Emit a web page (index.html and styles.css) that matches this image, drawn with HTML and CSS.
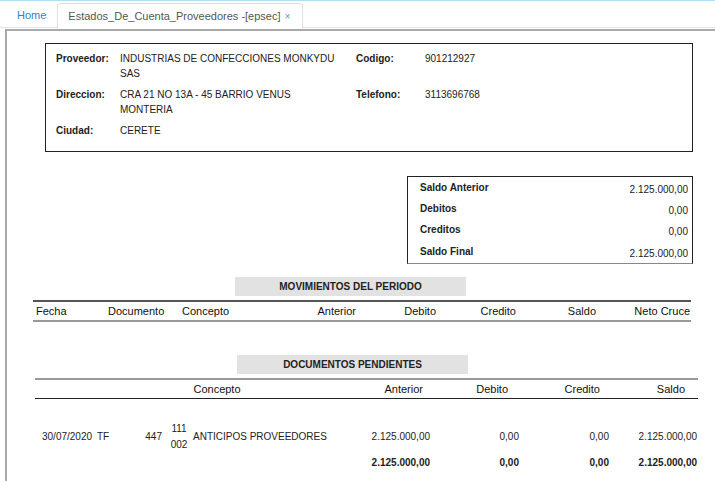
FILE: index.html
```html
<!DOCTYPE html>
<html lang="es">
<head>
<meta charset="utf-8">
<title>Estados_De_Cuenta_Proveedores</title>
<link rel="stylesheet" href="styles.css">
</head>
<body>
<div class="tabbar">
  <div class="tab tab-home">Home</div>
  <div class="tab tab-active">Estados_De_Cuenta_Proveedores -[epsec] <span class="close">×</span></div>
</div>
<div class="frame">
  <div class="info">
    <div class="lbl">Proveedor:</div>
    <div class="val">INDUSTRIAS DE CONFECCIONES MONKYDU SAS</div>
    <div class="lbl">Codigo:</div>
    <div class="val">901212927</div>
    <div class="lbl">Direccion:</div>
    <div class="val">CRA 21 NO 13A - 45 BARRIO VENUS MONTERIA</div>
    <div class="lbl">Telefono:</div>
    <div class="val">3113696768</div>
    <div class="lbl">Ciudad:</div>
    <div class="val">CERETE</div>
  </div>

  <div class="summary-wrap">
    <div class="summary">
      <div class="srow"><span class="slbl">Saldo Anterior</span><span class="sval">2.125.000,00</span></div>
      <div class="srow"><span class="slbl">Debitos</span><span class="sval">0,00</span></div>
      <div class="srow"><span class="slbl">Creditos</span><span class="sval">0,00</span></div>
      <div class="srow"><span class="slbl">Saldo Final</span><span class="sval">2.125.000,00</span></div>
    </div>
  </div>

  <div class="section-title mov-title">MOVIMIENTOS DEL PERIODO</div>
  <div class="mov-head">
    <div class="c-left">Fecha</div>
    <div class="c-left">Documento</div>
    <div class="c-left">Concepto</div>
    <div class="c-right">Anterior</div>
    <div class="c-right">Debito</div>
    <div class="c-right">Credito</div>
    <div class="c-right">Saldo</div>
    <div class="c-right c-last">Neto Cruce</div>
  </div>

  <div class="section-title doc-title">DOCUMENTOS PENDIENTES</div>
  <div class="doc">
    <div class="doc-head">
      <div class="h-concepto">Concepto</div>
      <div class="h-ant">Anterior</div>
      <div class="h-deb">Debito</div>
      <div class="h-cre">Credito</div>
      <div class="h-sal">Saldo</div>
    </div>
    <div class="doc-row">
      <div class="d-fecha">30/07/2020</div>
      <div class="d-tipo">TF</div>
      <div class="d-num">447</div>
      <div class="d-cta">111<br>002</div>
      <div class="d-con">ANTICIPOS PROVEEDORES</div>
      <div class="d-ant">2.125.000,00</div>
      <div class="d-deb">0,00</div>
      <div class="d-cre">0,00</div>
      <div class="d-sal">2.125.000,00</div>
    </div>
    <div class="doc-row doc-total">
      <div class="d-blank"></div>
      <div class="d-ant">2.125.000,00</div>
      <div class="d-deb">0,00</div>
      <div class="d-cre">0,00</div>
      <div class="d-sal">2.125.000,00</div>
    </div>
  </div>
</div>
</body>
</html>
```

FILE: styles.css
```css
* { box-sizing: border-box; }
html, body { margin: 0; padding: 0; background: #fff; }
body {
  width: 715px;
  height: 481px;
  overflow: hidden;
  font-family: "Liberation Sans", Arial, sans-serif;
  font-size: 10px;
  color: #222;
  border-top: 1px solid #b3dcf6;
}

.tabbar {
  display: flex;
  align-items: flex-end;
  height: 27px;
  padding-left: 10px;
  border-bottom: 1px solid #e3e3e3;
}
.tab {
  font-size: 11px;
  height: 24px;
  line-height: 24px;
  padding: 0 7px;
}
.tab-home { color: #2f7fd0; margin-right: 4px; }
.tab-active {
  color: #555;
  border: 1px solid #e0e0e0;
  border-bottom: none;
  border-radius: 4px 4px 0 0;
  padding: 0 12px 0 10px;
  margin-bottom: -1px;
  background: #fff;
  height: 25px;
}
.close { color: #5a9ad8; font-size: 10px; margin-left: 1px; }

.frame {
  margin: 1px 0 0 5px;
  border-top: 2px solid #a9a9a9;
  border-left: 2px solid #a9a9a9;
  height: 460px;
  padding: 12px 0 0 26px;
}

.info {
  width: 648px;
  margin-left: 12px;
  border: 1px solid #222;
  padding: 8px 0 12px 10px;
  display: grid;
  grid-template-columns: 64px 236px 69px 1fr;
  row-gap: 7px;
  line-height: 14.5px;
}
.lbl { font-weight: bold; }
.val { padding-right: 10px; }

.summary-wrap {
  display: flex;
  justify-content: flex-end;
  width: 660px;
  margin-top: 24px;
}
.summary {
  width: 286px;
  border: 1px solid #222;
  border-bottom-color: #888;
  padding: 0 4px 1px 12px;
}
.srow {
  display: flex;
  justify-content: space-between;
  height: 21.3px;
  align-items: center;
}
.slbl { font-weight: bold; }
.sval { padding-top: 4px; }

.section-title {
  background: #e2e2e2;
  font-weight: bold;
  text-align: center;
  width: 231px;
  height: 19px;
  line-height: 19px;
}
.mov-title { margin: 13px 0 0 202px; }

.mov-head {
  margin-top: 4px;
  width: 658px;
  border-top: 2px solid #555;
  border-bottom: 2px solid #999;
  display: grid;
  grid-template-columns: 72px 74px 111px 70px 80px 80px 80px 91px;
  height: 22px;
  align-items: center;
  font-size: 11px;
  color: #111;
}
.c-left { padding-left: 3px; }
.c-right { text-align: right; padding-right: 4px; }
.mov-head .c-right:first-of-type { padding-right: 3px; }
.mov-head .c-last { padding-right: 1px; }

.doc-title { margin: 33px 0 0 204px; }

.doc {
  margin: 4px 0 0 2px;
  width: 663px;
}
.doc-head {
  border-top: 2px solid #999;
  border-bottom: 1px solid #222;
  display: grid;
  grid-template-columns: 310px 87px 90px 90px 86px;
  height: 21px;
  align-items: center;
  font-size: 11px;
  color: #111;
}
.h-concepto { text-align: center; padding-left: 54px; }
.h-ant { text-align: right; padding-right: 9px; }
.h-deb { text-align: right; padding-right: 14px; }
.h-cre { text-align: right; padding-right: 12px; }
.h-sal { text-align: right; padding-right: 13px; }

.doc-row {
  display: grid;
  grid-template-columns: 60px 35px 35px 25px 155px 87px 90px 90px 86px;
  align-items: center;
  margin-top: 22px;
  line-height: 16px;
}
.d-fecha { padding-left: 7px; }
.d-tipo { padding-left: 2px; }
.d-num { text-align: right; padding-right: 3px; }
.d-cta { text-align: center; line-height: 16px; padding-left: 3px; }
.d-con { padding-left: 3px; }
.d-ant { text-align: right; padding-right: 2px; }
.d-deb { text-align: right; padding-right: 3px; }
.d-cre { text-align: right; padding-right: 3px; }
.d-sal { text-align: right; padding-right: 1px; }
.doc-total { margin-top: 2px; font-weight: bold; }
.doc-total .d-blank { grid-column: 1 / 6; }
```
